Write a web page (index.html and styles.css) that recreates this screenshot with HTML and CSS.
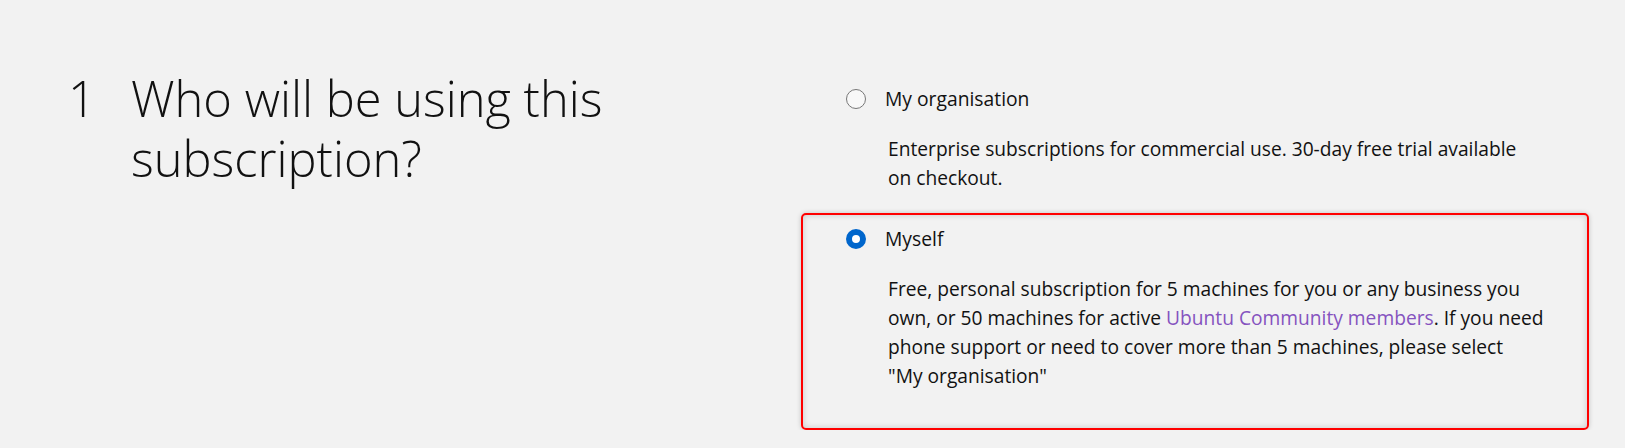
FILE: index.html
```html
<!DOCTYPE html>
<html lang="en">
<head>
    <meta charset="UTF-8">
    <meta name="viewport" content="width=device-width, initial-scale=1.0">
    <title>Subscription</title>
    <link rel="stylesheet" href="styles.css">
</head>
<body>
    <div class="step">
        <h2 class="step-title">
            <span class="step-number">1</span>
            <span class="step-text">Who will be using this subscription?</span>
        </h2>
        <div class="options">
            <div class="option">
                <label class="option-label">
                    <input type="radio" name="user" value="organisation">
                    <span>My organisation</span>
                </label>
                <p class="option-desc">Enterprise subscriptions for commercial use. 30-day free trial available<br>on checkout.</p>
            </div>
            <div class="option is-selected">
                <label class="option-label">
                    <input type="radio" name="user" value="myself" checked>
                    <span>Myself</span>
                </label>
                <p class="option-desc">Free, personal subscription for 5 machines for you or any business you own, or 50 machines for active <a href="#">Ubuntu Community members</a>. If you need phone support or need to cover more than 5 machines, please select "My&nbsp;organisation"</p>
            </div>
        </div>
    </div>
</body>
</html>
```

FILE: styles.css
```css
body {
    margin: 0;
    background: #f2f2f2;
    color: #111;
    font-family: "Open Sans", "Noto Sans", sans-serif;
}
.step {
    display: flex;
    padding: 68px 36px 0 68px;
}
.step-title {
    display: flex;
    width: 733px;
    margin: 0;
    font-size: 48.8px;
    font-weight: 300;
    line-height: 60px;
}
.step-number {
    width: 63px;
    flex-shrink: 0;
}
.step-text {
    width: 540px;
}
.options {
    width: 788px;
    margin-top: 5px;
}
.option {
    border: 2px solid transparent;
    border-radius: 5px;
    padding: 9px 0 18px 43px;
}
.option.is-selected {
    border-color: #ff0000;
    padding-bottom: 37px;
    box-shadow: 0 0 5px rgba(0, 0, 0, 0.2), inset 0 0 6px rgba(0, 0, 0, 0.18);
}
.option-label {
    display: flex;
    align-items: center;
    gap: 19px;
    font-size: 19.3px;
    line-height: 30px;
}
.option-label input {
    appearance: none;
    width: 20px;
    height: 20px;
    margin: 0;
    border: 1.5px solid #777;
    border-radius: 50%;
    background: #f8f8f8;
}
.option-label input:checked {
    border: 6.5px solid #0066cc;
    background: #fff;
}
.option-desc {
    max-width: 670px;
    margin: 20px 0 0 42px;
    font-size: 19.2px;
    line-height: 29.3px;
}
.option-desc a {
    color: #8553bf;
    text-decoration: none;
}
```
